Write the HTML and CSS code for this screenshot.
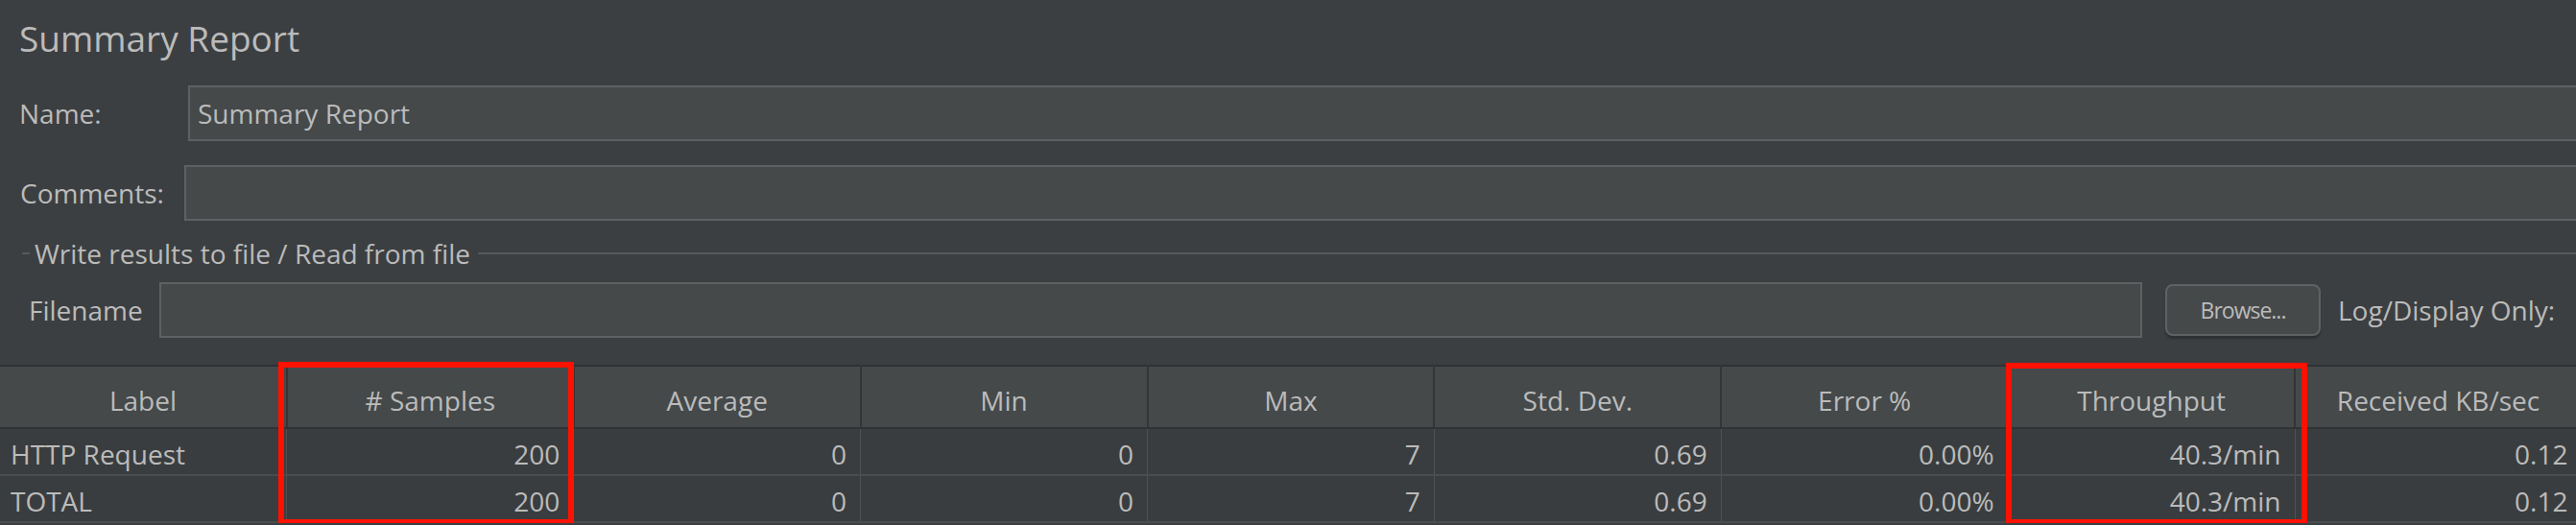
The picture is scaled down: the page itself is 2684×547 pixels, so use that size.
FILE: index.html
```html
<!DOCTYPE html>
<html lang="en">
<head>
    <meta charset="UTF-8">
    <title>Summary Report</title>
    <link rel="stylesheet" href="styles.css">
</head>
<body>

<div class="page">
    <h1 class="title">Summary Report</h1>

    <div class="field-row">
        <label class="field-label name-label" for="name">Name:</label>
        <input class="field-input" type="text" id="name" value="Summary Report">
    </div>

    <div class="field-row comments-row">
        <label class="field-label comments-label" for="comments">Comments:</label>
        <input class="field-input" type="text" id="comments">
    </div>

    <div class="group">
        <div class="group-title">
            <span class="group-dash"></span>
            <span class="group-text">Write results to file / Read from file</span>
            <span class="group-line"></span>
        </div>
        <div class="field-row file-row">
            <label class="field-label file-label" for="filename">Filename</label>
            <input class="field-input file-input" type="text" id="filename">
            <button class="browse-btn" type="button">Browse...</button>
            <span class="log-label">Log/Display Only:</span>
        </div>
    </div>

    <div class="results">
        <table class="results-table">
            <thead>
                <tr>
                    <th>Label</th>
                    <th># Samples</th>
                    <th>Average</th>
                    <th>Min</th>
                    <th>Max</th>
                    <th>Std. Dev.</th>
                    <th>Error %</th>
                    <th>Throughput</th>
                    <th>Received KB/sec</th>
                </tr>
            </thead>
            <tbody>
                <tr>
                    <td class="name-cell">HTTP Request</td>
                    <td>200</td>
                    <td>0</td>
                    <td>0</td>
                    <td>7</td>
                    <td>0.69</td>
                    <td>0.00%</td>
                    <td>40.3/min</td>
                    <td>0.12</td>
                </tr>
                <tr>
                    <td class="name-cell">TOTAL</td>
                    <td>200</td>
                    <td>0</td>
                    <td>0</td>
                    <td>7</td>
                    <td>0.69</td>
                    <td>0.00%</td>
                    <td>40.3/min</td>
                    <td>0.12</td>
                </tr>
            </tbody>
        </table>

        <!-- highlight boxes drawn over the table -->
        <div class="highlight highlight-samples"></div>
        <div class="highlight highlight-throughput"></div>
    </div>
</div>

</body>
</html>
```

FILE: styles.css
```css
body {
    margin: 0;
    background-color: #3c3f41;
    color: #bbbbbb;
    font-family: "Open Sans", "DejaVu Sans", sans-serif;
    font-size: 28px;
    overflow: hidden;
}
.page {
    width: 2720px;
}
.title {
    margin: 0;
    padding: 15px 0 0 20px;
    height: 50px;
    line-height: 50px;
    font-size: 37px;
    font-weight: normal;
}
.field-row {
    display: flex;
    align-items: center;
    height: 58px;
    margin-top: 24px;
}
.comments-row {
    margin-top: 25px;
}
.field-label {
    flex: none;
    line-height: 58px;
}
.name-label {
    width: 176px;
    padding-left: 20px;
}
.comments-label {
    width: 171px;
    padding-left: 21px;
}
.file-label {
    width: 136px;
    padding-left: 30px;
}
.field-input {
    flex: 1;
    box-sizing: border-box;
    height: 58px;
    margin: 0;
    padding: 0 8px;
    background-color: #45494a;
    border: 2px solid #5e6162;
    color: #bbbbbb;
    font-family: inherit;
    font-size: 28px;
    outline: none;
}
.group-title {
    display: flex;
    align-items: center;
    height: 30px;
    line-height: 30px;
    margin-top: 19px;
    padding-left: 23px;
}
.group-dash {
    width: 8px;
    height: 2px;
    background-color: #56595b;
}
.group-text {
    padding: 0 8px 0 5px;
}
.group-line {
    flex: 1;
    height: 2px;
    background-color: #56595b;
}
.file-row {
    margin-top: 15px;
}
.file-input {
    flex: none;
    width: 2066px;
}
.browse-btn {
    flex: none;
    box-sizing: border-box;
    width: 162px;
    height: 54px;
    margin-left: 24px;
    background-color: #45494a;
    border: 2px solid #5f6264;
    border-radius: 8px;
    box-shadow: 0 3px 2px rgba(0, 0, 0, 0.25);
    color: #bbbbbb;
    font-family: inherit;
    font-size: 23px;
    letter-spacing: -1px;
    padding: 0;
}
.log-label {
    margin-left: 18px;
    white-space: nowrap;
}
.results {
    position: relative;
    margin-top: 28px;
}
.results-table {
    width: 2691px;
    table-layout: fixed;
    border-collapse: collapse;
    border-top: 2px solid #2f3133;
}
.results-table th,
.results-table td {
    padding: 0 14px;
    font-weight: normal;
    white-space: nowrap;
    overflow: hidden;
}
.results-table th {
    box-sizing: border-box;
    height: 65px;
    padding-top: 6px;
    background-color: #45494a;
    border-bottom: 2px solid #303234;
    border-right: 2px solid #333537;
    text-align: center;
}
.results-table td {
    height: 49px;
    padding-top: 4px;
    box-sizing: border-box;
    background-color: #3a3d3f;
    border-bottom: 2px solid #4a4d4f;
    border-right: 1px solid #4f5254;
    text-align: right;
}
.results-table td.name-cell {
    padding-left: 11px;
    text-align: left;
}
.highlight {
    position: absolute;
    box-sizing: border-box;
    border: 6px solid #ff1100;
}
.highlight-samples {
    left: 290px;
    top: -3px;
    width: 308px;
    height: 170px;
}
.highlight-throughput {
    left: 2090px;
    top: -2px;
    width: 314px;
    height: 169px;
}
```
